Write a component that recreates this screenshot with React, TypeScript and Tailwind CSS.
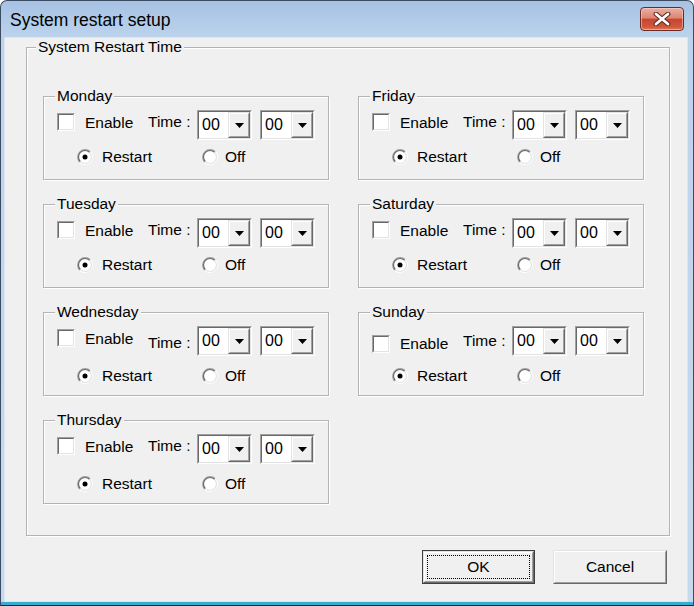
import React from 'react';

const sunken =
  'border border-t-[#a0a0a0] border-l-[#a0a0a0] border-r-white border-b-white';
const sunkenInner =
  'border border-t-[#696969] border-l-[#696969] border-r-[#e3e3e3] border-b-[#e3e3e3]';
const raised =
  'border border-t-[#e3e3e3] border-l-[#e3e3e3] border-r-[#696969] border-b-[#696969]';
const raisedInner =
  'border border-t-white border-l-white border-r-[#a0a0a0] border-b-[#a0a0a0]';

function Combo() {
  return (
    <div className={`w-[55px] h-[30px] ${sunken}`}>
      <div className={`w-full h-full flex bg-white ${sunkenInner}`}>
        <div className="flex-1 pl-[3px] text-[16px] leading-[26px]">00</div>
        <div className={`w-[22px] h-full bg-[#f0f0f0] ${raised}`}>
          <div className={`w-full h-full flex items-center justify-center ${raisedInner}`}>
            <svg width="9" height="5" viewBox="0 0 9 5">
              <path d="M0 0H9L4.5 5Z" fill="#000" />
            </svg>
          </div>
        </div>
      </div>
    </div>
  );
}

function Checkbox() {
  return (
    <div className={`w-[18px] h-[18px] ${sunken}`}>
      <div className={`w-full h-full bg-white ${sunkenInner}`} />
    </div>
  );
}

function Radio({ checked }: { checked?: boolean }) {
  return (
    <svg width="16" height="16" viewBox="0 0 16 16" className="shrink-0">
      <circle cx="8" cy="8" r="6.5" fill="#fff" />
      <path d="M2.7 13.3A7.5 7.5 0 0 1 13.3 2.7" stroke="#a0a0a0" strokeWidth="1.2" fill="none" />
      <path d="M13.3 2.7A7.5 7.5 0 0 1 2.7 13.3" stroke="#fff" strokeWidth="1.2" fill="none" />
      <path d="M3.4 12.6A6.5 6.5 0 0 1 12.6 3.4" stroke="#696969" strokeWidth="1.2" fill="none" />
      <path d="M12.6 3.4A6.5 6.5 0 0 1 3.4 12.6" stroke="#e3e3e3" strokeWidth="1.2" fill="none" />
      {checked && <circle cx="8" cy="8" r="2.5" fill="#000" />}
    </svg>
  );
}

function DayGroup({
  name,
  checkTop = 'mt-[3px]',
  enableTop = 'mt-[4px]',
  timeTop = 'mt-[3px]',
  radioTop = 'mt-[9px]',
}: {
  name: string;
  checkTop?: string;
  enableTop?: string;
  timeTop?: string;
  radioTop?: string;
}) {
  return (
    <div className="relative w-[286px] h-[84px] border border-[#b4b4b4] shadow-[inset_1px_1px_0_#fff,1px_1px_0_#fff]">
      <span className="absolute -top-[10px] left-[11px] px-[2px] bg-[#f0f0f0] leading-[18px]">
        {name}
      </span>
      <div className="flex items-start pt-[13px] pl-[13px]">
        <div className={`w-[28px] ${checkTop}`}>
          <Checkbox />
        </div>
        <span className={`w-[63px] leading-[18px] ${enableTop}`}>Enable</span>
        <span className={`w-[49px] leading-[18px] ${timeTop}`}>Time :</span>
        <div className="flex gap-[8px]">
          <Combo />
          <Combo />
        </div>
      </div>
      <div className={`flex items-center pl-[33px] h-[16px] ${radioTop}`}>
        <Radio checked />
        <span className="ml-[9px] w-[100px] leading-[18px]">Restart</span>
        <Radio />
        <span className="ml-[7px] leading-[18px]">Off</span>
      </div>
    </div>
  );
}

function CloseButton() {
  return (
    <div className="w-[44px] h-[24px] rounded-[4px] border border-[#6b2a24] bg-[linear-gradient(#eab0a3,#dd8573_45%,#c9452f_52%,#cf573c_85%,#e07b58)] shadow-[inset_0_0_0_1px_rgba(255,220,210,0.5)] flex items-center justify-center">
      <svg width="18" height="14" viewBox="0 0 18 14">
        <path d="M3 2L15 12M15 2L3 12" stroke="#5a2620" strokeWidth="4.8" strokeLinecap="round" />
        <path d="M3 2L15 12M15 2L3 12" stroke="#fff" strokeWidth="2.8" strokeLinecap="round" />
      </svg>
    </div>
  );
}

export default function App() {
  return (
    <div className="w-[694px] h-[606px] flex flex-col rounded-t-[7px] border border-[#3b4c62] border-b-[#16283f] bg-[linear-gradient(#a6c2e3,#bcd3ec_36px,#c6daef)] text-[15.5px] text-black font-['Liberation_Sans',Arial,sans-serif] overflow-hidden">
      <div className="h-[36px] flex items-center justify-between pl-[9px] pr-[9px] pt-[2px]">
        <span className="text-[17.5px] leading-[22px]">System restart setup</span>
        <div className="-mt-[2px]">
          <CloseButton />
        </div>
      </div>
      <div className="flex-1 ml-[3px] mr-[5px] bg-[#f0f0f0] border border-[#dce6f2] flex flex-col">
        <div className="relative ml-[21px] mt-[9px] w-[644px] h-[489px] border border-[#b4b4b4] shadow-[inset_1px_1px_0_#fff,1px_1px_0_#fff]">
          <span className="absolute -top-[10px] left-[9px] px-[2px] bg-[#f0f0f0] leading-[18px]">
            System Restart Time
          </span>
          <div className="flex gap-[29px] pl-[16px] pt-[48px]">
            <div className="flex flex-col gap-[24px]">
              <DayGroup name="Monday" />
              <DayGroup name="Tuesday" />
              <DayGroup name="Wednesday" timeTop="mt-[8px]" radioTop="mt-[12px]" />
              <DayGroup name="Thursday" radioTop="mt-[12px]" />
            </div>
            <div className="flex flex-col gap-[24px]">
              <DayGroup name="Friday" />
              <DayGroup name="Saturday" />
              <DayGroup
                name="Sunday"
                checkTop="mt-[9px]"
                enableTop="mt-[9px]"
                timeTop="mt-[6px]"
                radioTop="mt-[12px]"
              />
            </div>
          </div>
        </div>
        <div className="flex gap-[18px] ml-[417px] mt-[14px]">
          <div className="w-[113px] h-[34px] border border-[#404040]">
            <div className={`w-full h-full bg-[#f0f0f0] ${raised}`}>
              <div className={`w-full h-full p-[2px] ${raisedInner}`}>
                <div className="w-full h-full border border-dotted border-black flex items-center justify-center">
                  OK
                </div>
              </div>
            </div>
          </div>
          <div className={`w-[114px] h-[34px] bg-[#f0f0f0] ${raised}`}>
            <div className={`w-full h-full flex items-center justify-center ${raisedInner}`}>
              Cancel
            </div>
          </div>
        </div>
      </div>
      <div className="h-[3px] bg-[#38acd0]" />
    </div>
  );
}
